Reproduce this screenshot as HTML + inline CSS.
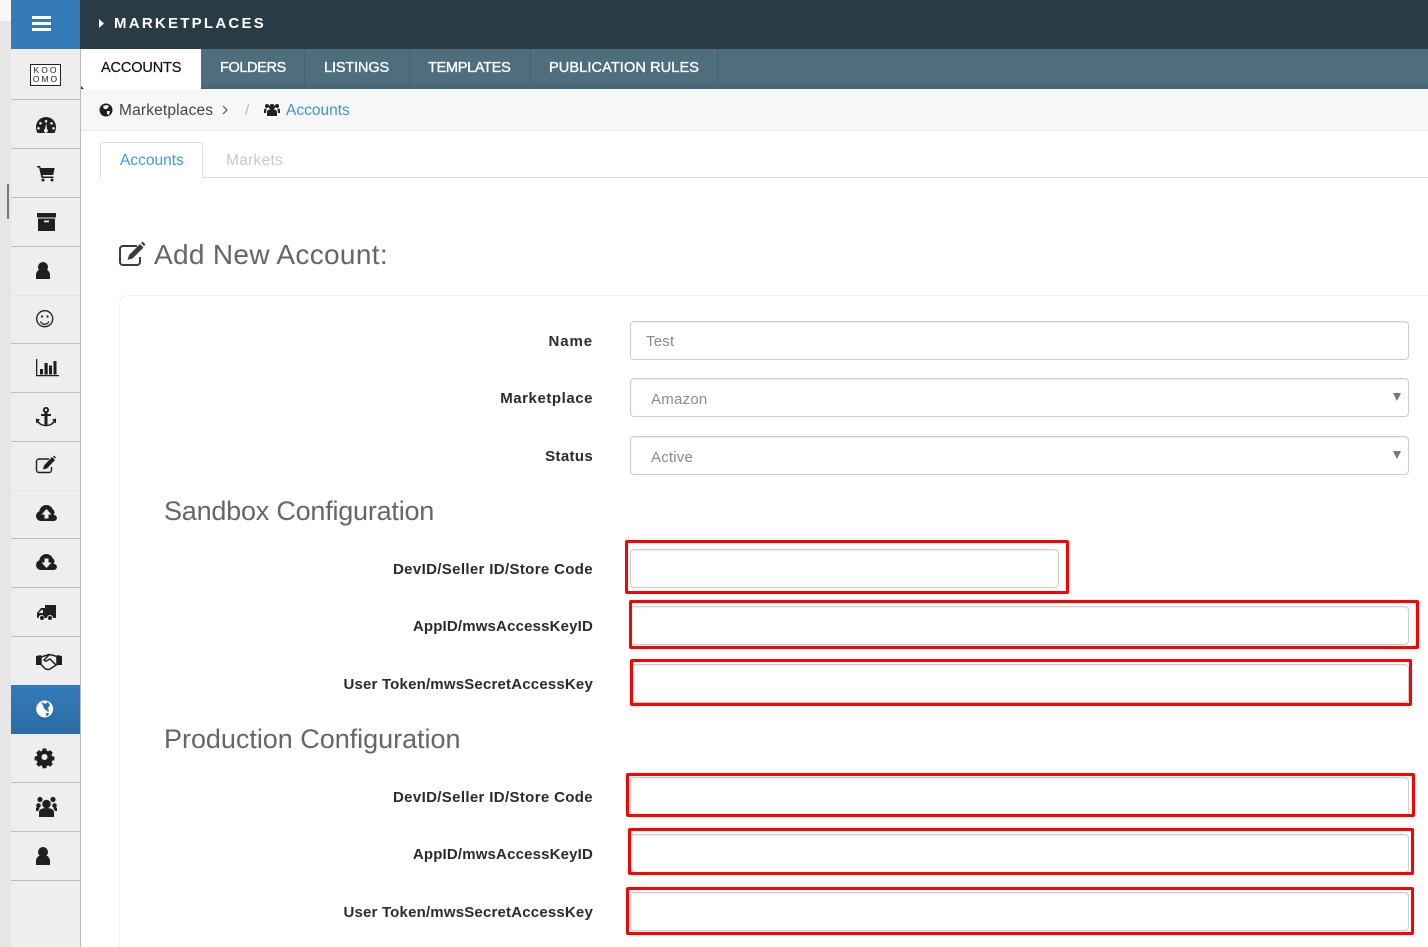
<!DOCTYPE html>
<html><head><meta charset="utf-8"><title>Marketplaces</title>
<style>
html,body{margin:0;padding:0;background:#fff;width:1428px;height:947px;overflow:hidden}
#w{position:relative;width:1428px;height:947px;overflow:hidden;font-family:"Liberation Sans",sans-serif;color:#333}
.a{position:absolute}
.t{position:absolute;white-space:nowrap;line-height:20px}
.sep{position:absolute;left:11px;width:69px;height:1px;background:#bdbdbd}
.nav{position:absolute;top:58px;font-size:14.5px;color:#fff;white-space:nowrap;line-height:20px;-webkit-text-stroke:.35px #fff}
.nsep{position:absolute;top:49px;width:1px;height:38px;background:#456270}
.lab{position:absolute;right:835px;font-size:15px;font-weight:700;color:#2b2b2b;white-space:nowrap;line-height:20px}
.in{position:absolute;box-sizing:border-box;left:630px;width:779px;height:39px;border:1px solid #ccc;border-radius:4px;background:#fff;box-shadow:inset 0 1px 1px rgba(0,0,0,.075);font-size:15px;color:#8a8a8a;line-height:37px}
.red{position:absolute;box-sizing:border-box;border:3px solid #f00;border-radius:2px}
.h{position:absolute;font-size:27px;color:#666;white-space:nowrap;line-height:34px}
.arr{position:absolute;right:7px;top:14px;width:0;height:0;border-left:4px solid transparent;border-right:4px solid transparent;border-top:8px solid #777}
</style></head><body><div id="w">
<div class="a" style="left:0;top:0;width:11px;height:947px;background:#e6e6e6"></div>
<div class="a" style="left:0;top:0;width:11px;height:21px;background:#f7f7f7"></div>
<div class="a" style="left:7px;top:184px;width:2px;height:35px;background:#777"></div>
<div class="a" style="left:11px;top:49px;width:69px;height:898px;background:#eee"></div>
<div class="a" style="left:80px;top:49px;width:1px;height:898px;background:#bbb"></div>
<div class="a" style="left:11px;top:0;width:69px;height:49px;background:#337ab7"></div>
<div class="a" style="left:80px;top:0;width:1348px;height:49px;background:#293b45"></div>
<div class="a" style="left:81px;top:49px;width:1347px;height:40px;background:linear-gradient(#4f6e7d 0,#4f6e7d 85%,#466270 100%)"></div>
<div class="a" style="left:81px;top:49px;width:120px;height:40px;background:#fff"></div>
<div class="nsep" style="left:304px"></div>
<div class="nsep" style="left:409px"></div>
<div class="nsep" style="left:530px"></div>
<div class="nsep" style="left:717px"></div>
<div class="t" style="left:114px;top:14px;font-size:15px;font-weight:700;color:#fff;letter-spacing:2.25px">MARKETPLACES</div>
<div class="nav" style="left:101px;color:#111;-webkit-text-stroke:.2px #111;letter-spacing:-.13px">ACCOUNTS</div>
<div class="nav" style="left:220px;letter-spacing:-.38px">FOLDERS</div>
<div class="nav" style="left:324px;letter-spacing:-.12px">LISTINGS</div>
<div class="nav" style="left:428px;letter-spacing:-.3px">TEMPLATES</div>
<div class="nav" style="left:549px;letter-spacing:.12px">PUBLICATION RULES</div>
<div class="a" style="left:81px;top:89px;width:1347px;height:41px;background:#f7f7f7;border-bottom:1px solid #e8e8e8"></div>
<div class="t" style="left:119px;top:101px;font-size:15.5px;color:#444;letter-spacing:.17px">Marketplaces</div>
<div class="t" style="left:245px;top:101px;font-size:15px;color:#bbb">/</div>
<div class="t" style="left:286px;top:101px;font-size:15.5px;color:#3f93d3">Accounts</div>
<div class="a" style="left:100px;top:177px;width:1328px;height:1px;background:#ddd"></div>
<div class="a" style="left:100px;top:142px;width:103px;height:36px;box-sizing:border-box;background:#fff;border:1px solid #ddd;border-bottom:0;border-radius:3px 3px 0 0"></div>
<div class="t" style="left:120px;top:151px;font-size:15.5px;color:#3f9ad9">Accounts</div>
<div class="t" style="left:226px;top:151px;font-size:15.5px;color:#c9c9c9;letter-spacing:.28px">Markets</div>
<div class="h" style="left:154px;top:238px;font-size:28px;letter-spacing:.32px">Add New Account:</div>
<div class="a" style="left:119px;top:295px;width:1309px;height:652px;box-sizing:border-box;border:1px solid #f0f0f0;border-right:0;border-bottom:0;border-radius:9px 0 0 0"></div>

<div class="lab" style="top:332px;letter-spacing:.9px">Name</div>
<div class="lab" style="top:389px;letter-spacing:.55px">Marketplace</div>
<div class="lab" style="top:447px;letter-spacing:.33px">Status</div>
<div class="lab" style="top:560px;letter-spacing:.35px">DevID/Seller ID/Store Code</div>
<div class="lab" style="top:617px;letter-spacing:.17px">AppID/mwsAccessKeyID</div>
<div class="lab" style="top:675px;letter-spacing:.19px">User Token/mwsSecretAccessKey</div>
<div class="lab" style="top:788px;letter-spacing:.35px">DevID/Seller ID/Store Code</div>
<div class="lab" style="top:845px;letter-spacing:.17px">AppID/mwsAccessKeyID</div>
<div class="lab" style="top:903px;letter-spacing:.19px">User Token/mwsSecretAccessKey</div>

<div class="in" style="top:321px;padding-left:15px"><span style="position:relative;top:1px;letter-spacing:.2px">Test</span></div>
<div class="in" style="top:378px;padding-left:20px"><span style="position:relative;top:2px;letter-spacing:.25px">Amazon</span><i class="arr"></i></div>
<div class="in" style="top:436px;padding-left:20px"><span style="position:relative;top:2px;letter-spacing:.2px">Active</span><i class="arr"></i></div>
<div class="h" style="left:164px;top:494px;letter-spacing:-.22px">Sandbox Configuration</div>
<div class="in" style="top:549px;width:429px"></div>
<div class="in" style="top:606px"></div>
<div class="in" style="top:664px"></div>
<div class="h" style="left:164px;top:722px;letter-spacing:-.03px">Production Configuration</div>
<div class="in" style="top:777px"></div>
<div class="in" style="top:834px"></div>
<div class="in" style="top:892px"></div>

<div class="red" style="left:625px;top:540px;width:444px;height:54px"></div>
<div class="red" style="left:629px;top:600px;width:790px;height:49px"></div>
<div class="red" style="left:630px;top:659px;width:782px;height:47px"></div>
<div class="red" style="left:626px;top:773px;width:789px;height:44px"></div>
<div class="red" style="left:628px;top:828px;width:786px;height:47px"></div>
<div class="red" style="left:626px;top:887px;width:788px;height:48px"></div>

<div class="sep" style="top:99px"></div><div class="sep" style="top:148px"></div><div class="sep" style="top:197px"></div>
<div class="sep" style="top:246px"></div><div class="sep" style="top:295px;background:#e4e4e4"></div><div class="sep" style="top:343px"></div>
<div class="sep" style="top:392px"></div><div class="sep" style="top:441px"></div><div class="sep" style="top:490px;background:#e4e4e4"></div>
<div class="sep" style="top:538px"></div><div class="sep" style="top:587px"></div><div class="sep" style="top:636px"></div>
<div class="a" style="left:11px;top:685px;width:69px;height:49px;background:linear-gradient(#337ab7,#2b6ca6)"></div>
<div class="sep" style="top:782px"></div><div class="sep" style="top:831px"></div><div class="sep" style="top:880px;background:#bbb"></div>

<div class="a" style="left:30px;top:64px;width:29px;height:19px;border:1px solid #222;background:#fff;color:#222;font-size:8.5px;line-height:8.5px;text-align:center;letter-spacing:2px;padding-top:1px"><div style="margin-left:1px">KOO</div><div style="margin-left:1px">OMO</div></div>

<svg class="a" style="left:0;top:0" width="1428" height="947" viewBox="0 0 1428 947">
<g fill="#fff"><rect x="32" y="16" width="19" height="3"/><rect x="32" y="22" width="19" height="3"/><rect x="32" y="28" width="19" height="3"/><path d="M99 19l5 4.500-5 4.500z"/></g>
<g fill="#1f1f1f">
<circle cx="106" cy="110" r="6.500"/><path fill="#f7f7f7" d="M103 106l4-1 2 1-2 3-3 0zM107 111l3 0-1 4-2-1z"/>
<circle cx="272" cy="107" r="3"/><circle cx="267" cy="106" r="2"/><circle cx="277" cy="106" r="2"/><path d="M267 116v-4c0-2 2-2.500 5-2.500s5 .5 5 2.500v4zM264 113v-3c0-1 1-1.500 2.500-1.500l-.5 4.500zM280 113v-3c0-1-1-1.500-2.500-1.500l.5 4.500z"/>
<path fill-rule="evenodd" d="M46 117a10 10 0 0 1 10 10c0 2-.5 4-1.500 6h-17c-1-2-1.500-4-1.500-6a10 10 0 0 1 10-10zM46 120a1.300 1.300 0 1 0 .01 0zM40.500 122a1.300 1.300 0 1 0 .01 0zM51.500 122a1.300 1.300 0 1 0 .01 0zM38.500 127a1.300 1.300 0 1 0 .01 0zM53.500 127a1.300 1.300 0 1 0 .01 0zM46.200 123l-1.200 6a2 2 0 1 0 2 .1z"/>
<path d="M37 166h3l.7 2h14l-1.500 7H42.500l.3 1.500H53.500V178H41.500L39 167.500H37z"/><circle cx="43" cy="180" r="1.500"/><circle cx="52" cy="180" r="1.500"/>
<path fill-rule="evenodd" d="M37 213h19v4.500H37zM38 218.500h17V231H38zM44 220.500v1.800h5v-1.800z"/>
<circle cx="43" cy="267" r="5"/><path d="M36 279v-4c0-3 2-5 4-5.500 2 1.500 4 1.500 6 0 2 .5 4 2.500 4 5.500v4z"/>
<path d="M36 359h1.300v16H59v1.300H36z"/><rect x="40" y="369" width="3" height="5.500"/><rect x="44.500" y="363" width="3.200" height="11.500"/><rect x="49" y="365.500" width="3" height="9"/><rect x="53.500" y="361" width="3" height="13.500"/>
<path fill-rule="evenodd" d="M46 407a3 3 0 0 1 1.500 5.600V414h3.500v2h-3.500v8.800c3-.4 5-2 6-3.800l-1.500-1.500 4-1v5l-1.300-1.300c-2 2.600-5 4-8.700 4s-6.700-1.400-8.700-4L36 423.500v-5l4 1-1.500 1.500c1 1.800 3 3.400 6 3.800V416H41v-2h3.500v-1.400A3 3 0 0 1 46 407zM46 408.800a1.200 1.200 0 1 0 .01 0z"/>
<path fill-rule="evenodd" d="M41 521a5 5 0 0 1-1.700-9.700c.5-3.500 3.400-6.300 7-6.300 3 0 5.400 1.800 6.500 4.400a3.500 3.500 0 0 1 .7 5.500 3.700 3.700 0 0 1 3.500 3 3.300 3.300 0 0 1-3 3.100zM46.500 509l-5 5.500h3v4h4v-4h3z"/>
<path fill-rule="evenodd" d="M41 570a5 5 0 0 1-1.700-9.700c.5-3.500 3.400-6.300 7-6.300 3 0 5.400 1.800 6.500 4.400a3.500 3.500 0 0 1 .7 5.500 3.700 3.700 0 0 1 3.500 3 3.300 3.300 0 0 1-3 3.100zM46.500 568l5-5.500h-3v-4h-4v4h-3z"/>
<path fill-rule="evenodd" d="M45 605h11v13h-3a3 3 0 0 0-6 0h-2.500a3 3 0 0 0-6 0H37v-5l4-5h4zM39 612.500v.5h4v-3h-1.500z"/><circle cx="42" cy="618" r="2"/><circle cx="50" cy="618" r="2"/>
<path fill-rule="evenodd" d="M42.700 749.500h3.600l.5 2.300 1.400.6 2-1.300 2.600 2.600-1.300 2 .6 1.400 2.300.5v3.600l-2.300.5-.6 1.400 1.300 2-2.600 2.600-2-1.300-1.400.6-.5 2.300h-3.600l-.5-2.300-1.400-.6-2 1.300-2.600-2.600 1.300-2-.6-1.400-2.300-.5v-3.600l2.300-.5.6-1.400-1.300-2 2.600-2.600 2 1.300 1.400-.6zM44.500 755a3 3 0 1 0 .01 0z" transform="translate(0 -1)"/>
<circle cx="46.500" cy="804" r="4.300"/><circle cx="40" cy="799.500" r="2.600"/><circle cx="53" cy="799.500" r="2.600"/><circle cx="38.500" cy="805.500" r="2.300"/><circle cx="54.500" cy="805.500" r="2.300"/>
<path d="M39 817v-5c0-2.500 3-4 7.500-4s7.500 1.500 7.500 4v5zM36 811v-2.500c0-1 1-1.500 2.500-1.500l1 1.500-1.500 2.500zM57 811v-2.500c0-1-1-1.500-2.500-1.500l-1 1.500 1.500 2.500z"/>
<circle cx="43" cy="852" r="5"/><path d="M36 865v-4c0-3 2-5 4-5.500 2 1.500 4 1.500 6 0 2 .5 4 2.500 4 5.500v4z"/>
</g>
<g fill="none" stroke="#1f1f1f" stroke-width="1.300"><circle cx="44.700" cy="318.700" r="8"/><path d="M40.500 321.500c1 2 2.500 2.800 4.200 2.800s3.200-.8 4.200-2.800"/></g>
<circle cx="42" cy="316.500" r="1.100" fill="#1f1f1f"/><circle cx="47.500" cy="316.500" r="1.100" fill="#1f1f1f"/>
<path fill="none" stroke="#1f1f1f" stroke-width="1.400" d="M49 459H39a2.500 2.500 0 0 0-2.500 2.500v8.500a2.500 2.500 0 0 0 2.500 2.500h10a2.500 2.500 0 0 0 2.500-2.500v-3"/>
<path fill="#1f1f1f" d="M52 457l3 3-8 8.500-4 1 1-4zM53 456.500l1-1 2 2-1 1z"/>
<path fill="#1f1f1f" d="M36 656l5-1v10h-5zM57 655l5 1v9h-5z"/>
<path fill="none" stroke="#1f1f1f" stroke-width="1.500" d="M41 657l5-1.500 3-1 3 .5 5 1.500v8l-7 4.500c-2 1-3.500 .5-5-.5l-4-4zM49 655l-5 5c1 1.500 2.500 1.500 4 0l2-1 6 6"/>
<circle cx="45" cy="711" r="8.500" fill="#1f5a8e" opacity=".5"/>
<circle cx="44.700" cy="709" r="8.500" fill="#fff"/>
<path fill="#2f73ad" d="M41 702c2 .5 3 2 5 1.500l2-1.500 2 3-2 3 1 3-1 1-2-2-2-1.500-1-3zM46 713l3 0-1 3-2-.5z"/>
<path fill="none" stroke="#3a3a3a" stroke-width="2" d="M137 246H123a3 3 0 0 0-3 3v13a3 3 0 0 0 3 3h14a3 3 0 0 0 3-3v-5"/>
<path fill="#3a3a3a" d="M140 244l3.500 3.500-11 11-5 1.500 1.500-5zM141 243l1.500-1.500 3 3L144 246z"/>
<path fill="none" stroke="#555" stroke-width="1.200" d="M223 106l4 4-4 4"/>
<path fill="#333" d="M81 86l3 3h-3z"/>
</svg>
</div></body></html>
